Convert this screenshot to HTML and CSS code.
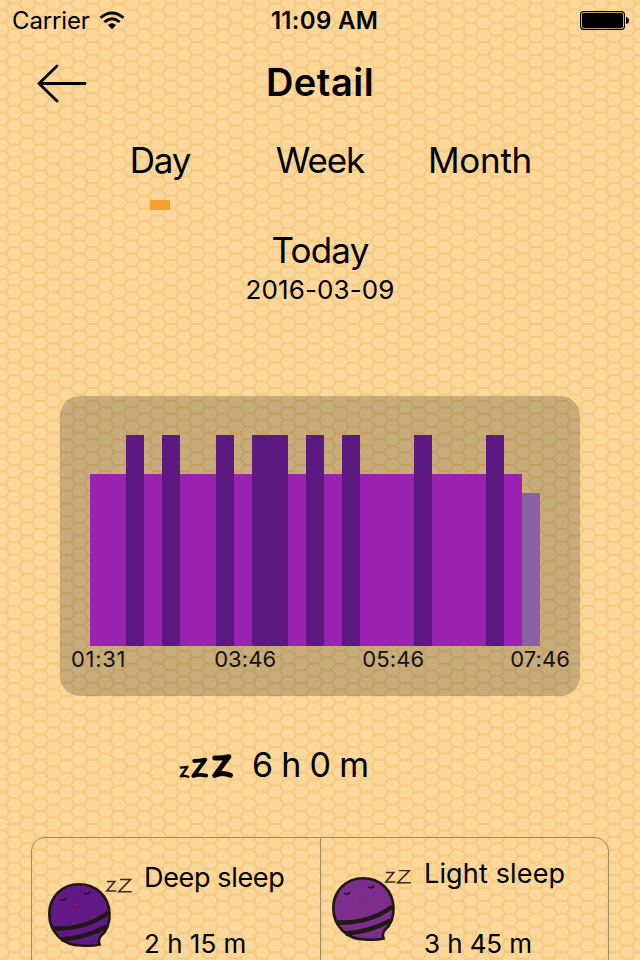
FILE: index.html
```html
<!DOCTYPE html>
<html lang="en">
<head>
<meta charset="utf-8">
<title>Detail</title>
<link rel="stylesheet" href="styles.css">
</head>
<body>
<svg class="honeycomb" width="640" height="960" aria-hidden="true">
  <defs>
    <pattern id="comb" width="26.08" height="12.82" patternUnits="userSpaceOnUse" patternTransform="translate(14.3 324)">
      <path d="M-4.6 0H4.6L8.48 6.41H17.6L21.48 0H30.68M-4.6 12.82H4.6L8.48 6.41M17.6 6.41L21.48 12.82H30.68"/>
    </pattern>
  </defs>
  <rect width="640" height="960" fill="url(#comb)"/>
</svg>
<div class="screen">
  <header class="status">
    <div class="carrier"><span class="carrier-name">Carrier</span>
      <svg width="26" height="20" viewBox="0 0 26 20"><g fill="none" stroke="#000" stroke-width="2.8"><path d="M1.5 6.8Q13-2.8 24.5 6.8"/><path d="M5.4 11Q13 4.4 20.6 11"/></g><path d="M13 18.3L8.9 14Q13 10.5 17.1 14Z"/></svg>
    </div>
    <div class="clock">11:09 AM</div>
    <svg class="battery" width="50" height="20" viewBox="0 0 50 20"><rect x=".6" y=".6" width="43.8" height="17.8" rx="3" fill="none" stroke="#000" stroke-width="1.1"/><rect x="2" y="2" width="41" height="15" rx="1.8"/><path d="M46 6Q49 6.5 49 9.5T46 13Z"/></svg>
  </header>
  <nav class="titlebar">
    <svg class="back" width="50" height="40" viewBox="0 0 50 40"><path d="M20 3L2 20.5L20 38M2 20.5H48" fill="none" stroke="#000" stroke-width="2.8" stroke-linecap="round" stroke-linejoin="round"/></svg>
    <h1>Detail</h1>
  </nav>
  <div class="tabs">
    <div class="tab active"><span class="t-day">Day</span></div>
    <div class="tab"><span class="t-week">Week</span></div>
    <div class="tab"><span class="t-month">Month</span></div>
  </div>
  <div class="date">
    <div class="today">Today</div>
    <div class="ymd">2016-03-09</div>
  </div>
  <section class="chart">
    <div class="bars">
      <i class="light"></i><i class="light"></i><i class="deep"></i><i class="light"></i><i class="deep"></i>
      <i class="light"></i><i class="light"></i><i class="deep"></i><i class="light"></i><i class="deep"></i>
      <i class="deep"></i><i class="light"></i><i class="deep"></i><i class="light"></i><i class="deep"></i>
      <i class="light"></i><i class="light"></i><i class="light"></i><i class="deep"></i><i class="light"></i>
      <i class="light"></i><i class="light"></i><i class="deep"></i><i class="light"></i><i class="awake"></i>
    </div>
    <div class="times"><span class="first">01:31</span><span class="second">03:46</span><span>05:46</span><span>07:46</span></div>
  </section>
  <div class="total">
    <svg width="56" height="26" viewBox="0 0 56 26"><g fill="none" stroke="#080500" stroke-linejoin="round" stroke-linecap="round"><path stroke-width="2.2" d="M2.8 13.6L9.5 12.8L2.8 22.5Q6.5 21.3 10.3 22.8"/><path stroke-width="3.8" d="M16.2 7Q21 7 27.4 5.7L15.4 22Q21 19.8 28.2 21.6"/><path stroke-width="5" d="M36.8 4Q43 4.5 50.8 2.8L36.8 21.4Q44 17.5 52.4 21.2"/></g></svg>
    <span class="hours">6 h 0 m</span>
  </div>
  <section class="card">
    <div class="cell deep-cell">
      <svg class="bee" width="86" height="72" viewBox="0 0 86 72"><use href="#bee"/><use href="#zz"/></svg>
      <div class="info"><span class="name">Deep sleep</span><span class="value">2 h 15 m</span></div>
    </div>
    <div class="cell light-cell">
      <svg class="bee" width="86" height="72" viewBox="0 0 86 72"><use href="#bee"/><use href="#zz" x="-5" y="-3"/></svg>
      <div class="info"><span class="name">Light sleep</span><span class="value">3 h 45 m</span></div>
    </div>
  </section>
</div>
<svg class="defs" width="0" height="0">
  <defs>
    <g id="bee">
      <path d="M32 8.2C15 8.2 2.3 21 2.3 38C2.3 56 16 69.4 34 69.5Q45 70.4 52.5 68.6Q51 65 53 61C60 55 63 46 62.5 37C61.5 20 49 8.2 32 8.2Z" fill="currentColor" stroke="#211714" stroke-width="2.6"/>
      <path d="M5 52.5Q38 54 61.5 36.5M14.5 63.5Q38 62 59.5 50.5" fill="none" stroke="#211714" stroke-width="4.6"/>
      <path d="M13.5 22.8Q16.5 25.5 19.5 22M37 16.8Q41 19.3 43 15.5" fill="none" stroke="#211714" stroke-width="1.7"/>
      <path d="M27.5 28.5Q30.5 30.5 32.5 27" fill="none" stroke="#962043" stroke-width="1"/>
    </g>
    <path id="zz" d="M60 5.5H67.8L59.8 15H69.3M73 3.5H83.5L71.8 15.8H84.8" fill="none" stroke="#3b2a20" stroke-width="1.6"/>
  </defs>
</svg>
</body>
</html>
```
FILE: styles.css
```css
* { box-sizing: border-box; }
body {
  margin: 0;
  width: 640px;
  height: 960px;
  overflow: hidden;
  position: relative;
  background: #fcd79b;
  color: #000;
  font-family: Inter, "Liberation Sans", sans-serif;
}
svg { display: block; flex: none; }
.honeycomb { position: absolute; left: 0; top: 0; }
.honeycomb path { fill: none; stroke: #f4ca7d; stroke-width: 1.9; }
.defs { position: absolute; }
.screen { position: relative; height: 960px; overflow: hidden; }
.status {
  display: grid;
  grid-template-columns: 1fr 160px 1fr;
  align-items: center;
  height: 40px;
  font-size: 24px;
  line-height: 40px;
}
.carrier { display: flex; align-items: center; padding-left: 12px; gap: 9px; }
.carrier-name { width: 78px; padding-top: 1px; white-space: nowrap; letter-spacing: -.15px; }
.clock { text-align: center; font-weight: 600; padding: 1px 0 0 9px; letter-spacing: .3px; white-space: nowrap; }
.battery { justify-self: end; margin-right: 10px; margin-top: 1px; }
.titlebar {
  display: grid;
  grid-template-columns: 100px 1fr 100px;
  align-items: center;
  height: 86px;
}
.back { margin-left: 37px; }
h1 { margin: 0; text-align: center; font-size: 38px; font-weight: 600; line-height: 82px; height: 84px; letter-spacing: .5px; }
.tabs { display: grid; grid-template-columns: repeat(3, 160px); justify-content: center; height: 94px; }
.tab { text-align: center; font-size: 35px; line-height: 68px; height: 84px; }
.t-day { letter-spacing: -1.2px; }
.t-week { letter-spacing: -1.1px; }
.t-month { letter-spacing: -.3px; }
.active::after { content: ""; display: block; width: 20px; height: 10px; margin: 6px auto 0; background: #f89f2c; }
.date { height: 176px; text-align: center; }
.today { font-size: 35px; line-height: 44px; padding-top: 8px; letter-spacing: -.8px; }
.ymd { font-size: 26px; line-height: 35px; letter-spacing: .1px; }
.chart {
  width: 520px;
  height: 300px;
  margin: 0 auto;
  border-radius: 20px;
  background: rgba(0, 0, 0, .2);
}
.bars { display: flex; align-items: flex-end; height: 250px; padding-left: 30px; }
.bars i { width: 18px; }
.deep { height: 211px; background: #5d1982; }
.light { height: 172.5px; background: #9a22b1; }
.awake { height: 153.5px; background: #8861a5; }
.times { display: flex; justify-content: space-between; padding: 0 10px 0 11px; font-size: 22px; line-height: 27px; letter-spacing: .1px; color: #111; }
.first { letter-spacing: .7px; }
.second { margin-left: 2px; }
.total { display: flex; align-items: center; height: 141px; padding-left: 178px; gap: 18px; }
.hours { font-size: 34px; line-height: 40px; margin-top: -4px; letter-spacing: -.7px; white-space: nowrap; }
.card {
  display: grid;
  grid-template-columns: 289px 1fr;
  width: 578px;
  height: 200px;
  margin-left: 31px;
  border: 1px solid #a08961;
  border-radius: 14px;
}
.cell { display: flex; }
.deep-cell { border-right: 1px solid #a08961; padding: 38px 0 0 15px; color: #621987; }
.light-cell { padding: 32px 0 0 10px; color: #7d2d8c; }
.info { display: flex; flex-direction: column; font-size: 27px; line-height: 34px; color: #000; white-space: nowrap; }
.info { margin-left: 11px; margin-top: -15px; }
.name { letter-spacing: -.35px; }
.value { margin-top: 32px; font-size: 26px; }
.light-cell .info { margin-left: 7px; margin-top: -13px; }
.light-cell .name { letter-spacing: .15px; }
.light-cell .value { margin-top: 36px; letter-spacing: -.1px; }
```
